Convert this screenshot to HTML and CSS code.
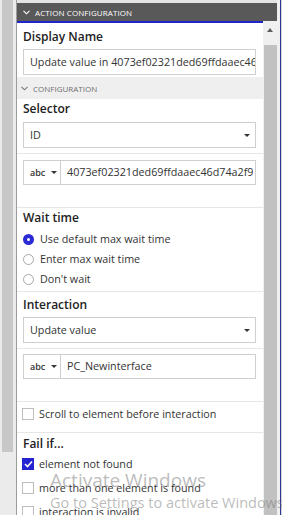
FILE: index.html
```html
<!DOCTYPE html>
<html lang="en">
<head>
    <meta charset="UTF-8">
    <meta name="viewport" content="width=device-width, initial-scale=1.0">
    <title>Action Configuration</title>
    <link rel="stylesheet" href="styles.css">
</head>
<body>
    <div class="rail">
        <div class="rail-bar"></div>
    </div>

    <div class="panel">
        <div class="panel-head">
            <svg class="chevron" width="7" height="5" viewBox="0 0 7 5"><polyline points="0.5,0.8 3.5,3.8 6.5,0.8" fill="none" stroke="#fff" stroke-width="1.1"/></svg>
            <span>Action Configuration</span>
        </div>

        <div class="panel-body">
            <div class="content">
                <div class="section first">
                    <div class="label">Display Name</div>
                    <div class="field">Update value in 4073ef02321ded69ffdaaec46d74a2f9</div>
                </div>

                <div class="group-head">
                    <svg class="chevron" width="7" height="5" viewBox="0 0 7 5"><polyline points="0.5,0.8 3.5,3.8 6.5,0.8" fill="none" stroke="#777" stroke-width="1.1"/></svg>
                    <span>Configuration</span>
                </div>

                <div class="section sel">
                    <div class="label">Selector</div>
                    <div class="field select">ID <i class="caret"></i></div>
                </div>

                <div class="section value">
                    <div class="combo">
                        <div class="addon">abc <i class="caret"></i></div>
                        <div class="combo-text">4073ef02321ded69ffdaaec46d74a2f9</div>
                    </div>
                </div>

                <div class="section wait">
                    <div class="label">Wait time</div>
                    <div class="option"><span class="radio on"></span>Use default max wait time</div>
                    <div class="option"><span class="radio"></span>Enter max wait time</div>
                    <div class="option"><span class="radio"></span>Don't wait</div>
                </div>

                <div class="section interaction">
                    <div class="label">Interaction</div>
                    <div class="field select">Update value <i class="caret"></i></div>
                </div>

                <div class="section value">
                    <div class="combo">
                        <div class="addon">abc <i class="caret"></i></div>
                        <div class="combo-text">PC_Newinterface</div>
                    </div>
                </div>

                <div class="section scroll">
                    <div class="option"><span class="check"></span>Scroll to element before interaction</div>
                </div>

                <div class="section fail">
                    <div class="label">Fail if...</div>
                    <div class="option tall"><span class="check on"><svg width="9" height="8" viewBox="0 0 9 8"><polyline points="1,4 3.5,6.5 8,1.5" fill="none" stroke="#fff" stroke-width="1.6"/></svg></span>element not found</div>
                    <div class="option tall"><span class="check"></span>more than one element is found</div>
                    <div class="option tall"><span class="check"></span>interaction is invalid</div>
                </div>
            </div>

            <div class="scrollbar">
                <i class="arrow-up"></i>
                <div class="thumb"></div>
            </div>
        </div>
    </div>

    <div class="edge"></div>

    <!-- OS watermark lying over the panel -->
    <div class="watermark">
        <div class="wm-title">Activate Windows</div>
        <div class="wm-sub">Go to Settings to activate Windows.</div>
    </div>
</body>
</html>
```

FILE: styles.css
```css
body {
    margin: 0;
    width: 282px;
    height: 515px;
    overflow: hidden;
    display: flex;
    font-family: "Open Sans", "Noto Sans", sans-serif;
    background-color: #ebebeb;
    color: #222;
}
.rail {
    width: 16px;
    flex: none;
}
.rail-bar {
    margin-left: 2px;
    width: 11px;
    height: 452px;
    background: #c7c7c7;
}
.panel {
    width: 260px;
    flex: none;
    border-left: 1px solid #9c9c9c;
    display: flex;
    flex-direction: column;
    background: #e4e4e4;
}
.panel-head {
    margin-top: 3px;
    height: 18px;
    background: #595959;
    color: #fff;
    display: flex;
    align-items: center;
    padding-left: 6px;
    font-size: 8px;
    text-transform: uppercase;
    letter-spacing: 0.1px;
}
.chevron {
    margin-right: 5px;
}
.panel-body {
    flex: 1;
    display: flex;
    min-height: 0;
}
.content {
    width: 246px;
    background: #fff;
    border-top: 2px solid #2424cc;
    overflow: hidden;
}
.scrollbar {
    width: 14px;
    background: #f0f0f0;
    display: flex;
    flex-direction: column;
    align-items: center;
}
.arrow-up {
    margin-top: 7px;
    width: 0;
    height: 0;
    border-left: 3.5px solid transparent;
    border-right: 3.5px solid transparent;
    border-bottom: 4px solid #5e5e5e;
}
.thumb {
    margin-top: 13px;
    width: 13px;
    flex: 1;
    background: #c1c1c1;
}
.edge {
    width: 5px;
    flex: none;
    background: linear-gradient(to right, #efefef 0 3px, #2f3595 3px 4px, #d8d8d8 4px);
}

.section {
    padding: 0 7px 0 6px;
    border-bottom: 1px solid #e6e6e6;
}
.label {
    height: 16px;
    line-height: 16px;
    font-size: 12px;
    font-weight: 600;
}
.field {
    height: 24px;
    border: 1px solid #cfcfcf;
    padding-left: 6px;
    font-size: 10.75px;
    line-height: 24px;
    color: #333;
    white-space: nowrap;
    overflow: hidden;
    position: relative;
}
.select {
    padding-right: 16px;
}
.caret {
    display: inline-block;
    width: 0;
    height: 0;
    border-left: 3px solid transparent;
    border-right: 3px solid transparent;
    border-top: 3.5px solid #333;
    vertical-align: middle;
}
.select .caret {
    position: absolute;
    right: 5px;
    top: 11px;
}

.first {
    padding-top: 6px;
    padding-bottom: 2px;
    border-bottom: none;
}
.first .label {
    margin-bottom: 4px;
}
.group-head {
    height: 22px;
    background: #efefef;
    display: flex;
    align-items: center;
    padding-left: 4px;
    font-size: 8px;
    color: #6f6f6f;
    text-transform: uppercase;
}
.sel {
    padding-top: 2px;
    padding-bottom: 5px;
}
.sel .label {
    margin-bottom: 5px;
}
.value {
    padding-top: 6px;
    padding-bottom: 22px;
}
.combo {
    height: 23px;
    border: 1px solid #cfcfcf;
    display: flex;
    font-size: 10.75px;
    color: #333;
}
.addon {
    width: 37px;
    flex: none;
    border-right: 1px solid #cfcfcf;
    font-size: 9px;
    font-weight: 600;
    line-height: 23px;
    padding-left: 6px;
    box-sizing: border-box;
}
.addon .caret {
    margin-left: 3px;
    margin-top: -2px;
}
.combo-text {
    padding-left: 6px;
    line-height: 23px;
    white-space: nowrap;
    overflow: hidden;
}

.wait {
    padding-top: 2px;
    padding-bottom: 2px;
}
.wait .label {
    margin-bottom: 3px;
}
.option {
    height: 20px;
    display: flex;
    align-items: center;
    font-size: 10.75px;
    color: #333;
    white-space: nowrap;
}
.option.tall {
    height: 24px;
}
.radio {
    width: 9px;
    height: 9px;
    border: 1px solid #a8a8a8;
    border-radius: 50%;
    margin-right: 6px;
    flex: none;
    box-sizing: content-box;
}
.radio.on {
    width: 3px;
    height: 3px;
    border: 4px solid #2a2ad6;
    background: #fff;
}
.check {
    width: 10px;
    height: 10px;
    border: 1px solid #bdbdbd;
    margin-left: -1px;
    margin-right: 5px;
    flex: none;
    display: flex;
    align-items: center;
    justify-content: center;
}
.check.on {
    background: #2323d2;
    border-color: #2323d2;
}
.interaction {
    padding-top: 5px;
    padding-bottom: 5px;
}
.interaction .label {
    margin-bottom: 4px;
}
.interaction + .value {
    padding-top: 5px;
}
.scroll {
    padding-top: 2px;
    padding-bottom: 8px;
}
.fail {
    padding-top: 3px;
    border-bottom: none;
}

.watermark {
    position: absolute;
    left: 50px;
    top: 467px;
    color: rgba(120, 120, 120, 0.5);
    white-space: nowrap;
    pointer-events: none;
}
.wm-title {
    font-size: 19px;
    line-height: 26px;
}
.wm-sub {
    font-size: 14.5px;
    line-height: 20px;
}
```
